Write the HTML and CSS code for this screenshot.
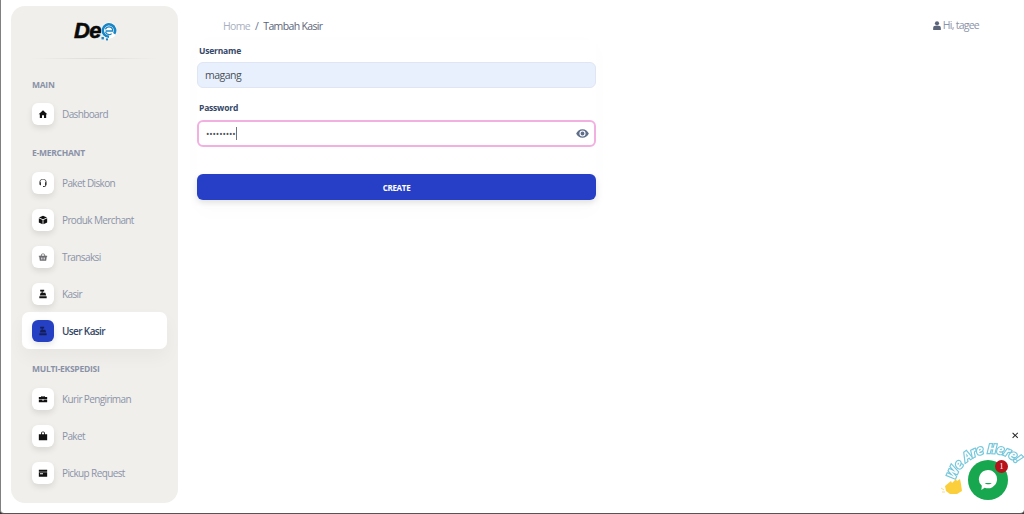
FILE: index.html
```html
<!DOCTYPE html>
<html lang="id">
<head>
<meta charset="utf-8">
<title>Tambah Kasir</title>
<link rel="stylesheet" href="styles.css">
</head>
<body>
<div class="app">
  <aside class="sidebar">
    <div class="logo">
      <span class="logo-de">De</span>
      <svg class="logo-e" width="17" height="19" viewBox="0 0 17 19"><circle cx="9" cy="8.5" r="8" fill="#fff"/><path d="M14.2 11.8A6.2 6.2 0 1 0 9 14.7" fill="none" stroke="#1a86c4" stroke-width="2.6"/><path d="M5.4 7.4A3.8 3.8 0 0 1 12.6 7.4V9H5.6M5.6 9.8A3.6 3.6 0 0 0 11.6 11.6" stroke="#1a86c4" stroke-width="1.3" fill="none"/><rect x="1.5" y="15" width="2.4" height="2.4" fill="#1a86c4"/><rect x="6" y="16.4" width="2" height="2" fill="#1a86c4"/></svg>
    </div>
    <div class="divider"></div>
    <h6 class="section section-first">MAIN</h6>
    <a class="item"><span class="ico"><svg viewBox="0 0 12 12"><path d="M6 1.4 11.2 6.2H9.8V10.8H7.2V7.6H4.8V10.8H2.2V6.2H.8Z"/></svg></span>Dashboard</a>
    <h6 class="section">E-MERCHANT</h6>
    <a class="item"><span class="ico ico-soft"><svg viewBox="0 0 12 12"><path d="M6 1.2A4.3 4.3 0 0 0 1.7 5.5V7.6A1 1 0 0 0 2.7 8.6H3.6V5H2.8A3.2 3.2 0 0 1 9.2 5H8.4V8.6H9A2 2 0 0 1 7.2 9.7H6V10.7H7.2A3 3 0 0 0 10.1 8.4 1 1 0 0 0 10.3 7.6V5.5A4.3 4.3 0 0 0 6 1.2Z"/></svg></span>Paket Diskon</a>
    <a class="item"><span class="ico"><svg viewBox="0 0 12 12"><path d="M6 .9 10.8 3 6 5.1 1.2 3ZM1 3.9 5.5 5.9V11.2L1 9.1ZM11 3.9V9.1L6.5 11.2V5.9Z"/></svg></span>Produk Merchant</a>
    <a class="item"><span class="ico ico-muted"><svg viewBox="0 0 12 12"><path d="M1 4.6H3L5 1.6 5.8 2.1 4.2 4.6H7.8L6.2 2.1 7 1.6 9 4.6H11V5.8H10.5L9.8 10.4H2.2L1.5 5.8H1ZM3.6 6.6V9H4.4V6.6ZM5.6 6.6V9H6.4V6.6ZM7.6 6.6V9H8.4V6.6Z"/></svg></span>Transaksi</a>
    <a class="item"><span class="ico"><svg viewBox="0 0 12 12"><path d="M2.6 .8H7.4V3H5.6V4.4H8.8L9.8 7.8H2.2L3.2 4.4H4.4V3H2.6ZM1.6 8.6H10.4V11.2H1.6Z"/></svg></span>Kasir</a>
    <a class="item item-active"><span class="ico"><svg viewBox="0 0 12 12"><path d="M2.6 .8H7.4V3H5.6V4.4H8.8L9.8 7.8H2.2L3.2 4.4H4.4V3H2.6ZM1.6 8.6H10.4V11.2H1.6Z"/></svg></span>User Kasir</a>
    <h6 class="section section-tight">MULTI-EKSPEDISI</h6>
    <a class="item"><span class="ico"><svg viewBox="0 0 12 12"><path d="M4 2.4H8V3.6H11V6.2H1V3.6H4ZM5 3V3.6H7V3ZM1 7H5V7.8H7V7H11V10H1Z"/></svg></span>Kurir Pengiriman</a>
    <a class="item"><span class="ico"><svg viewBox="0 0 12 12"><path d="M3.6 4V3A2.4 2.4 0 0 1 8.4 3V4H11V11H1V4ZM4.6 4H7.4V3A1.4 1.4 0 0 0 4.6 3Z"/></svg></span>Paket</a>
    <a class="item"><span class="ico"><svg viewBox="0 0 12 12"><path d="M1 2H11V4.4H1ZM1 5.2H11V10.6H1ZM2.4 6.4V7.4H6V6.4Z"/></svg></span>Pickup Request</a>
  </aside>

  <main class="main">
    <header class="topbar">
      <nav class="crumbs"><span class="crumb-home">Home</span><span class="crumb-sep">/</span><span class="crumb-current">Tambah Kasir</span></nav>
      <div class="user"><svg class="user-ico" viewBox="0 0 10 11" width="8" height="9"><circle cx="5" cy="2.8" r="2.6"/><path d="M.2 11V8.4A2.6 2.6 0 0 1 2.8 5.8H7.2A2.6 2.6 0 0 1 9.8 8.4V11Z"/></svg>Hi, tagee</div>
    </header>
    <form class="form">
      <label class="label">Username</label>
      <div class="input input-filled">magang</div>
      <label class="label label-pass">Password</label>
      <div class="input input-focus"><span class="dots">•••••••••</span><span class="caret"></span>
        <svg class="eye" viewBox="0 0 14 11" width="13" height="11"><path fill-rule="evenodd" d="M7 .8C3.8.8 1.3 3 .2 5.5 1.3 8 3.8 10.2 7 10.2S12.7 8 13.8 5.5C12.7 3 10.2.8 7 .8ZM7 2.2A3.3 3.3 0 1 1 7 8.8 3.3 3.3 0 0 1 7 2.2ZM7 3.4A2.1 2.1 0 0 0 4.9 5.5 2.1 2.1 0 1 0 7 3.4Z"/></svg>
      </div>
      <button class="btn" type="button">CREATE</button>
    </form>
  </main>
</div>

<div class="chat">
  <svg class="chat-art" width="100" height="90" viewBox="0 0 100 90">
    <defs><path id="arc" d="M31 56C35 40 51 29 66 29S89 34 98 46"/></defs>
    <text class="chat-text"><textPath href="#arc">We Are Here!</textPath></text>
    <path d="M21 62 27 57 28 59 32 55 33 57 36 55 37 60 38 67 33 70 26 70 22 67Z" fill="#fbcf3c"/>
    <path d="M17 64 20 66M18 68 21 68" stroke="#f3dc8e" stroke-width="1" fill="none"/>
  </svg>
  <div class="chat-btn">
    <svg width="20" height="22" viewBox="0 0 24 26"><path d="M12 1A11 11 0 1 1 8 22.3L4 25 4.6 20A11 11 0 0 1 12 1Z" fill="#fff"/><path d="M8 16.5C10 18.5 14.5 18.5 16.5 16.5Z" fill="#17a84f"/></svg>
  </div>
  <span class="chat-badge">1</span>
  <span class="chat-close">✕</span>
</div>
</body>
</html>
```
FILE: styles.css
```css
* { box-sizing: border-box; }
html { height: 100%; overflow: hidden; background: #333; }
body {
  margin: 0;
  height: 100%;
  overflow: hidden;
  background: #fff;
  font-family: "Open Sans", "Liberation Sans", sans-serif;
  color: #67748e;
  border-left: 1px solid #808080;
  border-bottom: 1px solid #555;
  border-radius: 0 0 4px 4px;
}
.app { display: flex; height: 513px; }

.sidebar {
  width: 167px;
  height: 497px;
  margin: 6px 0 0 10px;
  padding: 0 11px;
  flex: none;
  background: #f0efeb;
  border-radius: 14px;
}
.logo {
  height: 39px;
  padding: 13px 0 0 2px;
  display: flex;
  justify-content: center;
  align-items: flex-start;
}
.logo-de {
  font: italic 700 22px/24px "Liberation Sans", sans-serif;
  color: #0a0a0a;
  letter-spacing: -.6px;
  -webkit-text-stroke: .6px #0a0a0a;
}
.logo-e { margin: 3px 0 0 -1px; }
.divider {
  height: 1px;
  margin: 13px 10px 0;
  background: linear-gradient(90deg, transparent, #dedcd6 50%, transparent);
}
.section {
  margin: 14px 0 4px 10px;
  font-size: 8.5px;
  line-height: 14px;
  font-weight: 700;
  letter-spacing: -.27px;
  color: #8a92a8;
}
.section-first { margin: 19px 0 3px 10px; }
.section-tight { margin-top: 13px; }

.item {
  height: 37px;
  padding-left: 10px;
  display: flex;
  align-items: center;
  gap: 8px;
  font-size: 10px;
  letter-spacing: -.62px;
  color: #8b93a9;
  border-radius: 7px;
}
.ico {
  width: 22px;
  height: 22px;
  flex: none;
  display: flex;
  align-items: center;
  justify-content: center;
  background: #fff;
  border-radius: 6px;
  box-shadow: 0 3px 6px rgba(0, 0, 0, .1);
}
.ico svg { width: 10px; height: 10px; fill: #111; }
.ico-muted svg { fill: #6e6e72; }
.ico-soft svg { fill: #333; }
.item-active {
  background: #fff;
  color: #344767;
  font-weight: 600;
  box-shadow: 0 8px 18px rgba(0, 0, 0, .04);
}
.item-active .ico { background: #2640c4; }
.item-active .ico svg { fill: #141e5a; }

.main { flex: 1; min-width: 0; padding-left: 19px; }
.topbar {
  height: 40px;
  padding: 18px 45px 0 26px;
  display: flex;
  justify-content: space-between;
}
.crumbs { font-size: 10.5px; line-height: 16px; letter-spacing: -.65px; display: flex; gap: 5px; }
.crumb-home { color: #a9b0bf; }
.crumb-sep { color: #67748e; }
.crumb-current { color: #5b6478; }
.user { font-size: 10.5px; line-height: 14px; letter-spacing: -.75px; color: #8b93a9; display: flex; align-items: flex-start; gap: 2px; }
.user-ico { fill: #5b6478; margin-top: 3px; }

.form {
  width: 399px;
  padding-bottom: 8px;
  box-shadow: 0 4px 20px rgba(0, 0, 0, .015);
}
.label {
  display: block;
  padding-left: 2px;
  height: 22px;
  font-size: 8.5px;
  line-height: 21px;
  font-weight: 700;
  letter-spacing: -.2px;
  color: #344767;
}
.label-pass { margin-top: 9px; height: 23px; line-height: 22px; }
.input {
  position: relative;
  height: 27px;
  padding: 0 7px;
  display: flex;
  align-items: center;
  font-size: 10.5px;
  letter-spacing: -.5px;
  color: #495057;
  border: 1px solid #dfe5f2;
  border-radius: 6px;
}
.input-filled { height: 26px; background: #e8f0fe; }
.input-focus { border: 2px solid #f2b0e0; padding-left: 7px; background: #fff; }
.dots { font-size: 9px; letter-spacing: -.1px; color: #495057; }
.caret { width: 1px; height: 13px; background: #6b7280; }
.eye { position: absolute; right: 5px; top: 6px; fill: #5f6f8a; }
.btn {
  display: block;
  width: 100%;
  height: 26px;
  margin-top: 27px;
  border: 0;
  border-radius: 6px;
  background: #263fc6;
  color: #fff;
  font: 700 8px "Open Sans", sans-serif;
  letter-spacing: -.3px;
  box-shadow: 0 3px 6px rgba(0, 0, 0, .12);
}

.chat { position: fixed; right: 0; bottom: 0; width: 100px; height: 90px; }
.chat-art { position: absolute; left: 0; top: 0; }
.chat-text {
  font: italic 700 12.5px "Open Sans", sans-serif;
  fill: #fff;
  stroke: #76c8dc;
  stroke-width: 2.4px;
  paint-order: stroke;
}
.chat-btn {
  position: absolute;
  left: 44px;
  top: 36px;
  width: 40px;
  height: 40px;
  display: flex;
  align-items: center;
  justify-content: center;
  background: #17a84f;
  border-radius: 50%;
}
.chat-badge {
  position: absolute;
  left: 71px;
  top: 36px;
  width: 13px;
  height: 13px;
  background: #b5121b;
  color: #fff;
  border-radius: 50%;
  font: 8px/13px "Liberation Serif", serif;
  text-align: center;
}
.chat-close { position: absolute; left: 87px; top: 7px; width: 10px; font: 700 10px/10px "DejaVu Sans", sans-serif; color: #222; }
```
